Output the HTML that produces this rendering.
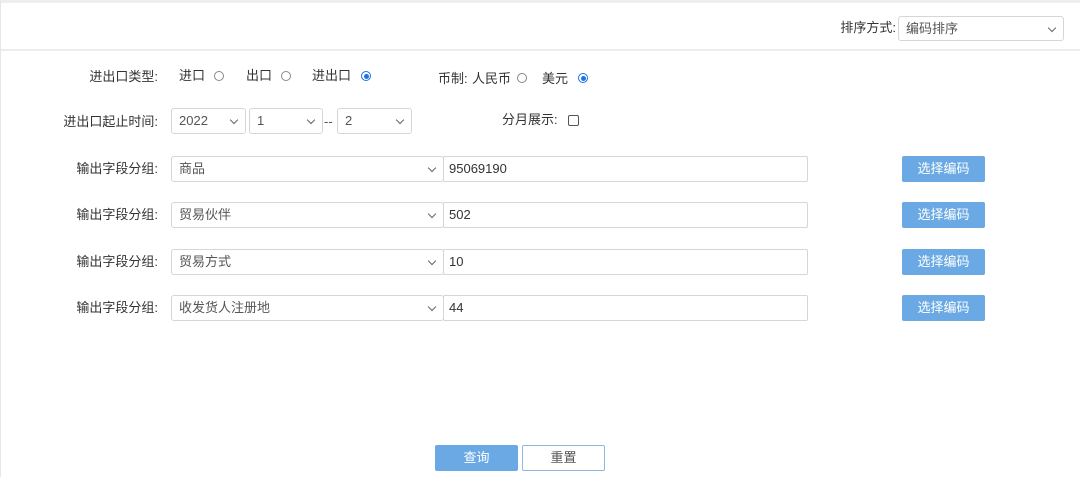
<!DOCTYPE html>
<html><head><meta charset="utf-8"><style>
*{box-sizing:border-box;margin:0;padding:0}
body{width:1080px;height:477px;background:#fff;font-family:"Liberation Sans","Noto Sans CJK SC",sans-serif;font-size:13px;line-height:16px;color:#333;position:relative;overflow:hidden;white-space:nowrap}
.a{position:absolute}
.top{left:0;top:0;width:1080px;height:3px;background:#eeeeee}
.hl{left:0;top:49px;width:1080px;height:2px;background:#ececec}
.vl{left:0;top:0;width:1px;height:477px;background:#e6e6e6}
.sel{position:absolute;border:1px solid #d6d6d6;border-radius:3px;background:#fff;color:#555;padding-left:7px;line-height:24px;font-size:13px}
.sel:after{content:"";position:absolute;right:8px;top:8px;width:5px;height:5px;border-right:1.5px solid #666;border-bottom:1.5px solid #666;transform:rotate(45deg)}
.inp{position:absolute;border:1px solid #d6d6d6;border-radius:2px;background:#fff;padding-left:5px;line-height:24px;color:#333}
.lbl{position:absolute;text-align:right;color:#333}
.r{position:absolute;width:10px;height:10px;border:1px solid #888;border-radius:50%}
.rc{border-color:#1a73e8}
.rc:after{content:"";position:absolute;left:1.5px;top:1.5px;width:5px;height:5px;border-radius:50%;background:#1a73e8}
.btn{position:absolute;left:902px;width:83px;height:26px;background:#6aa9e3;color:#fff;text-align:center;line-height:26px;border-radius:2px;font-size:13px}
</style></head><body>
<div class="a top"></div><div class="a hl"></div><div class="a vl"></div>
<div class="lbl" style="left:820px;top:20px;width:76px">排序方式:</div>
<div class="sel" style="left:898px;top:16px;width:166px;height:25px">编码排序</div>

<div class="lbl" style="left:60px;top:69px;width:98px">进出口类型:</div>
<div class="a" style="left:179px;top:68px">进口</div><div class="r" style="left:214px;top:71px"></div>
<div class="a" style="left:246px;top:68px">出口</div><div class="r" style="left:281px;top:71px"></div>
<div class="a" style="left:312px;top:68px">进出口</div><div class="r rc" style="left:361px;top:71px"></div>
<div class="a" style="left:438px;top:71px">币制:</div>
<div class="a" style="left:472px;top:71px">人民币</div><div class="r" style="left:517px;top:73px"></div>
<div class="a" style="left:542px;top:71px">美元</div><div class="r rc" style="left:578px;top:73px"></div>

<div class="lbl" style="left:40px;top:114px;width:118px">进出口起止时间:</div>
<div class="sel" style="left:171px;top:108px;width:75px;height:26px">2022</div>
<div class="sel" style="left:249px;top:108px;width:74px;height:26px">1</div>
<div class="a" style="left:324px;top:114px;color:#555">--</div>
<div class="sel" style="left:337px;top:108px;width:75px;height:26px">2</div>
<div class="a" style="left:502px;top:112px">分月展示:</div>
<div class="a" style="left:568px;top:115px;width:11px;height:11px;border:1px solid #555;border-radius:2px"></div>

<div class="lbl" style="left:50px;top:161px;width:108px">输出字段分组:</div>
<div class="sel" style="left:171px;top:156px;width:273px;height:26px">商品</div>
<div class="inp" style="left:443px;top:156px;width:365px;height:26px">95069190</div>
<div class="btn" style="top:156px">选择编码</div>

<div class="lbl" style="left:50px;top:207px;width:108px">输出字段分组:</div>
<div class="sel" style="left:171px;top:202px;width:273px;height:26px">贸易伙伴</div>
<div class="inp" style="left:443px;top:202px;width:365px;height:26px">502</div>
<div class="btn" style="top:202px">选择编码</div>

<div class="lbl" style="left:50px;top:254px;width:108px">输出字段分组:</div>
<div class="sel" style="left:171px;top:249px;width:273px;height:26px">贸易方式</div>
<div class="inp" style="left:443px;top:249px;width:365px;height:26px">10</div>
<div class="btn" style="top:249px">选择编码</div>

<div class="lbl" style="left:50px;top:300px;width:108px">输出字段分组:</div>
<div class="sel" style="left:171px;top:295px;width:273px;height:26px">收发货人注册地</div>
<div class="inp" style="left:443px;top:295px;width:365px;height:26px">44</div>
<div class="btn" style="top:295px">选择编码</div>

<div class="a" style="left:435px;top:445px;width:83px;height:26px;background:#6aa9e3;color:#fff;text-align:center;line-height:26px;border-radius:2px">查询</div>
<div class="a" style="left:522px;top:445px;width:83px;height:26px;border:1px solid #8fb8e0;color:#555;text-align:center;line-height:24px;border-radius:2px">重置</div>
</body></html>
